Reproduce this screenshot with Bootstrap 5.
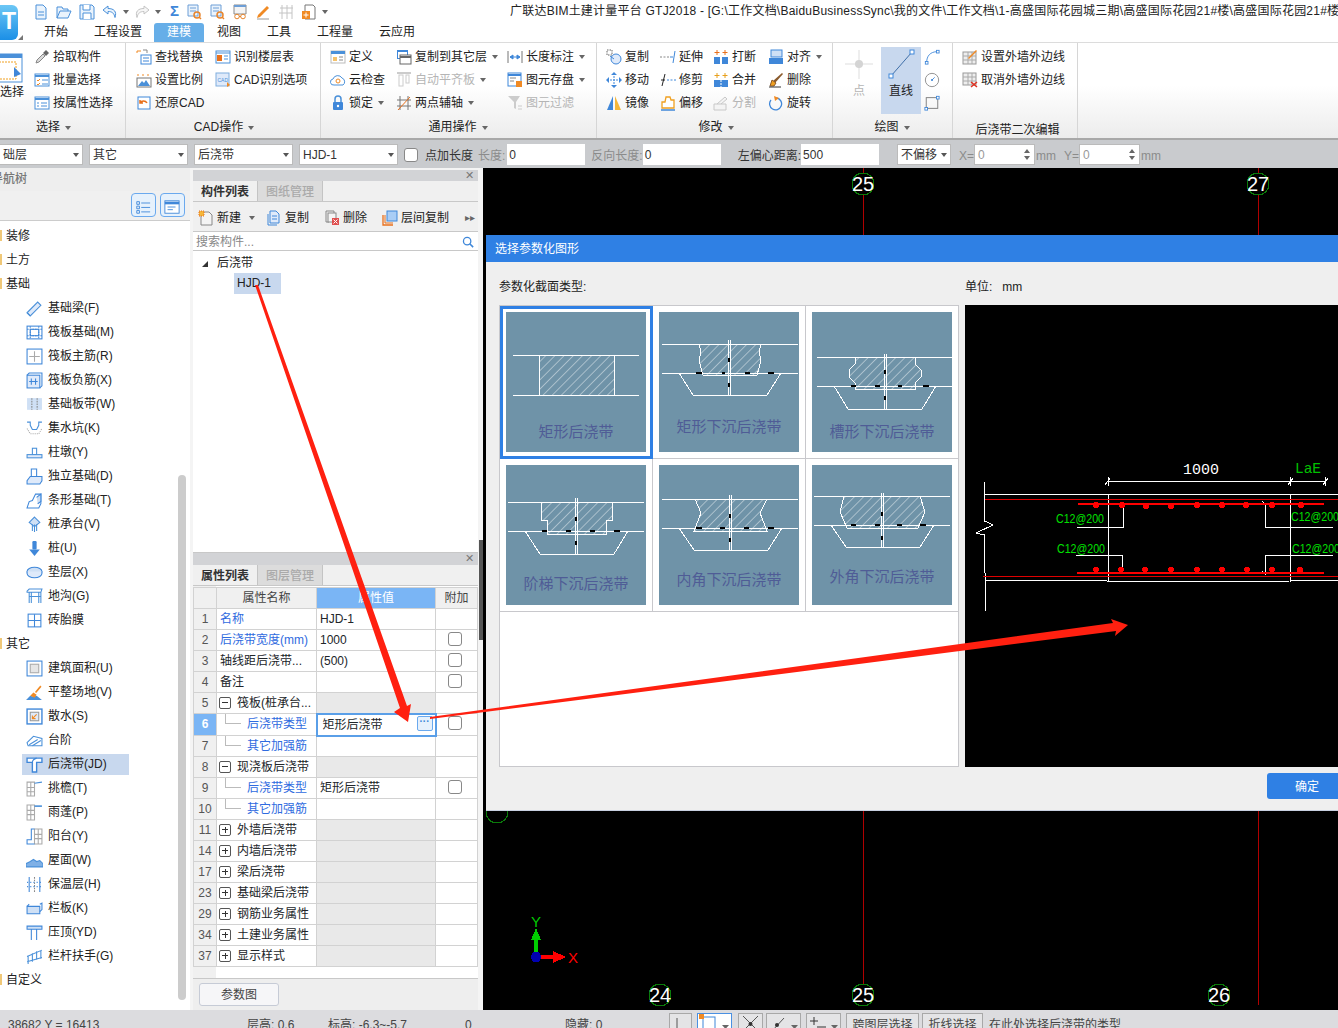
<!DOCTYPE html>
<html lang="zh-CN">
<head>
<meta charset="UTF-8">
<title>广联达BIM土建计量平台 GTJ2018</title>
<link href="https://cdn.jsdelivr.net/npm/bootstrap@5.3.0/dist/css/bootstrap.min.css" rel="stylesheet">
<style>
    html, body { margin: 0; background: #f4f4f4; }
    body { font-family: "Liberation Sans", "Noto Sans CJK SC", sans-serif; font-size: 12px; color: #222; }
    .app { width: 1338px; height: 1028px; overflow: hidden; position: relative; }
    .sprite { position: absolute; width: 0; height: 0; }
    .ic { width: 16px; height: 16px; flex: none; }
    .crt { display: inline-block; flex: none; width: 0; height: 0; border: 3.5px solid transparent; border-top: 4px solid #666; border-bottom: 0; margin-left: 5px; vertical-align: 1px; }

    /* title + tabs */
    .top-row { height: 23px; background: #fff; }
    .logo-box { width: 18px; height: 35px; margin-top: 5px; border-radius: 0 6px 6px 0; background: linear-gradient(#6cc7f5, #1b8fe6); color: #fff; font-weight: 700; font-size: 23px; line-height: 33px; text-align: right; padding-right: 2px; overflow: hidden; flex: none; }
    .logo-tri { position: absolute; left: 18px; top: 35px; width: 0; height: 0; border-left: 5px solid transparent; border-bottom: 5px solid #777; }
    .qa-bar { padding-left: 33px; gap: 7px; height: 23px; width: 510px; flex: none; }
    .qa-bar .crt { margin: 0 -2px; }
    .qa-sum { margin-left: 4px; font-size: 15px; color: #3f87d9; font-weight: 700; }
    .title-txt { white-space: nowrap; line-height: 22px; letter-spacing: .22px; }
    .tabs-row { height: 19px; background: #fff; padding-left: 44px; }
    .tabs-row span { line-height: 19px; white-space: nowrap; }
    .tab-on { background: #66aee8; color: #fff; width: 50px; text-align: center; border-radius: 3px 3px 0 0; }
    .t1 { margin-right: 26px; } .t2 { margin-right: 12px; } .t3 { margin-right: 13px; } .t4 { margin-right: 26px; } .t5 { margin-right: 26px; } .t6 { margin-right: 26px; }
    .logo-abs { position: absolute; left: 0; top: 0; }

    /* ribbon */
    .ribbon { height: 98px; border-top: 1px solid #dcdcdc; background: linear-gradient(#fff 45%, #ececec); border-bottom: 2px solid #a8a8a8; }
    .rb-group { border-right: 1px solid #d6d6d6; height: 95px; flex: none; position: relative; }
    .rb-body { height: 73px; padding-top: 2px; }
    .rb-label { text-align: center; line-height: 22px; white-space: nowrap; }
    .lb-g1 { padding-right: 18px; } .lb-g2 { padding-right: 8px; } .lb-g3 { padding-right: 10px; } .lb-g4 { padding-right: 6px; } .lb-g5 { padding-right: 12px; }
    .lb-g6 { padding-top: 3px; padding-right: 4px; }
    .rb-item { height: 23px; display: flex; align-items: center; gap: 3px; white-space: nowrap; }
    .rb-item .crt { margin-left: 2px; }
    .is-off { color: #b5b5b5; }
    .g1 { width: 126px; } .g2 { width: 195px; padding-left: 10px; } .g3 { width: 276px; padding-left: 9px; }
    .g4 { width: 236px; padding-left: 9px; } .g5 { width: 120px; padding-left: 11px; } .g6 { width: 125px; padding-left: 9px; }
    .big-cut { width: 34px; overflow: hidden; text-align: right; }
    .big-cut svg { display: block; width: 23px; height: 30px; margin-top: 8px; }
    .big-cut span { display: block; line-height: 18px; margin-right: 13px; white-space: nowrap; }
    .c79 { width: 79px; } .c66 { width: 66px; } .c111 { width: 111px; } .c54 { width: 54px; } .c53 { width: 53px; } .c55 { width: 55px; }
    .big-btn { display: flex; flex-direction: column; align-items: center; height: 67px; margin-top: 2px; line-height: 18px; }
    .big-pt { width: 30px; color: #b5b5b5; margin-right: 7px; }
    .big-ln { width: 40px; background: #c8d8ee; margin-right: 3px; }
    .big-btn svg { width: 30px; height: 30px; margin-top: 2px; margin-bottom: 3px; }
    .draw-col { width: 18px; }

    /* option bar */
    .optbar { height: 28px; background: #c9cbce; padding-top: 4px; white-space: nowrap; color: #333; }
    .o-sel { height: 21px; background: #fff; border: 1px solid #bbb; padding: 0 3px; margin-right: 6px; flex: none; }
    .o-sel .crt { border-top-color: #555; }
    .s83 { width: 83px; border-left: 0; } .s99 { width: 99px; }
    .s54 { width: 54px; margin: 0 8px 0 18px; }
    .o-chk { width: 14px; height: 14px; margin: 0 7px 0 0; border-radius: 3px; border-color: #888; }
    .o-in { background: #fff; height: 21px; line-height: 22px; padding-left: 2px; flex: none; width: 78px; }
    .o-gray { color: #8b8b8b; }
    .m1 { margin-left: 2px; margin-right: 1px; } .m2 { margin-left: 5px; } .m3 { margin-left: 17px; }
    .spin { width: 61px; background: #fff; height: 21px; border: 1px solid #bbb; padding-left: 3px; color: #999; flex: none; margin: 0 1px 0 0; }
    .spin-ar { gap: 3px; margin-right: 4px; }
    .spin-ar i { display: block; width: 0; height: 0; border: 3px solid transparent; }
    .spin-ar i:first-child { border-bottom: 4px solid #666; border-top: 0; }
    .spin-ar i:last-child { border-top: 4px solid #666; border-bottom: 0; }
    .gap-x { margin-left: 8px; }

    /* main */
    .main-area { height: 842px; }
    .nav-col { width: 190px; flex: none; background: #fff; position: relative; }
    .nav-head { height: 23px; background: #eee; color: #777; line-height: 22px; font-weight: 500; text-indent: -9px; overflow: hidden; }
    .nav-tools { height: 30px; background: #f0f0f0; border-bottom: 1px solid #ccc; padding: 2px 5px 0 0; gap: 4px; }
    .nav-btn { width: 25px; height: 24px; background: #e6f1fc; border: 1px solid #6aa9ee; border-radius: 4px; padding: 3px; }
    .nav-row { height: 24px; display: flex; align-items: center; white-space: nowrap; padding-left: 26px; gap: 5px; position: relative; }
    .nav-row .ic { width: 17px; height: 17px; }
    .nav-list { padding-top: 3px; }
    .nav-grp { padding-left: 6px; }
    .nav-grp::before { content: ""; position: absolute; left: 0; top: 6px; width: 2px; height: 11px; background: #f0c878; }
    .nav-sel::after { content: ""; position: absolute; left: 22px; top: 2px; width: 107px; height: 21px; background: #c8d8ee; z-index: 0; }
    .nav-row > * { position: relative; z-index: 1; }
    .nav-scroll { position: absolute; left: 178px; top: 307px; width: 8px; height: 525px; background: #ccc; border-radius: 4px; }
    .mid-col { width: 285px; flex: none; margin-left: 3px; padding-top: 2px; }
    .mid-gap { width: 5px; flex: none; }
    .mid-gap div { width: 4px; height: 100px; margin-top: 372px; margin-left: 1px; background: #555; }
    .panel-bar { height: 11px; background: #d2d3d6; text-align: right; line-height: 10px; color: #777; font-size: 11px; padding-right: 4px; }
    .panel-bar2 { height: 12px; }
    .tab-row { height: 21px; background: #f0f0f0; border-bottom: 1px solid #c8c8c8; }
    .tab-item { width: 65px; text-align: center; line-height: 22px; color: #aaa; font-weight: 500; background: #dcdcdc; border-right: 1px solid #c4c4c4; }
    .tab-cur { background: #f0f0f0; color: #333; font-weight: 700; }
    .list-tools { height: 30px; background: #f0f0f0; border-bottom: 1px solid #c8c8c8; padding: 2px 0 0 5px; white-space: nowrap; }
    .lt { gap: 3px; }
    .lt1 { margin-right: 11px; } .lt2 { margin-right: 15px; } .lt3 { margin-right: 15px; } .lt4 { margin-left: auto; margin-right: 3px; color: #666; font-size: 10px; }
    .search-row { height: 19px; background: #fff; border-bottom: 1px solid #c8c8c8; padding: 2px 4px 0 3px; color: #888; line-height: 18px; }
    .tree-box { height: 302px; background: #fff; border-bottom: 1px solid #c8c8c8; }
    .tree-line1 { padding: 2px 0 0 9px; line-height: 20px; }
    .tree-tri { display: inline-block; width: 0; height: 0; border-left: 6px solid transparent; border-bottom: 6px solid #333; margin-right: 9px; }
    .tree-cur { display: inline-block; margin-left: 41px; background: #c8d8ee; width: 47px; height: 21px; line-height: 21px; padding-left: 3px; }
    .prop-wrap { background: linear-gradient(90deg, #f0f0f0 23px, #fff 23px); height: 393px; padding-top: 1px; border-bottom: 1px solid #c8c8c8; }
    .prop-tbl { table-layout: fixed; width: 284px; margin: 0; border-color: #d2d2d2; }
    .prop-tbl td, .prop-tbl th { padding: 0 3px; height: 21px; line-height: 20px; font-weight: 400; white-space: nowrap; overflow: hidden; }
    .prop-tbl .n { background: #f0f0f0; color: #555; text-align: center; padding: 0; }
    .prop-tbl .hd { background: #f0f0f0; text-align: center; color: #444; }
    .prop-tbl .hd-on { background: #7ab5f5; color: #fff; text-align: center; }
    .prop-tbl .n-on { background: #7ab5f5; color: #fff; font-weight: 700; text-align: center; padding: 0; }
    .prop-tbl .gry { background: #e9e9e9; }
    .prop-tbl .blu { color: #2f6be0; }
    .prop-tbl .sub { padding-left: 30px; position: relative; }
    .prop-tbl .ctr { text-align: center; padding: 0 4px 0 0; }
    .prop-tbl .edit { border: 2px solid #5a9fe8; padding: 0 0 0 5px; position: relative; }
    .chk { width: 14px; height: 14px; margin: 2px 0 0; border-radius: 3px; border-color: #888; }
    .exp { display: inline-block; width: 12px; height: 12px; border: 1px solid #555; border-radius: 2px; margin: 0 6px 0 -1px; vertical-align: -2px; position: relative; }
    .exp::before { content: ""; position: absolute; left: 2px; top: 4px; width: 6px; height: 1px; background: #333; }
    .exp-p::after { content: ""; position: absolute; left: 4.5px; top: 2px; width: 1px; height: 6px; background: #333; }
    .tl::before { content: ""; position: absolute; left: 8px; top: -6px; width: 16px; height: 16px; border-left: 1px solid #bbb; border-bottom: 1px solid #bbb; }
    .dots-btn { position: absolute; right: 2px; top: 1px; width: 16px; height: 15px; background: #e6f1fc; border: 1px solid #6aa9ee; border-radius: 2px; color: #3f87d9; font-size: 10px; line-height: 10px; text-align: center; font-weight: 700; }
    .prop-foot { height: 31px; background: #eee; padding: 4px 0 0 6px; }
    .btn-param { width: 80px; height: 23px; font-size: 12px; padding: 0; background: #f6f6f8; border: 1px solid #c6cbd6; color: #444; border-radius: 3px; }

    /* canvas + dialog */
    .cad-view { width: 855px; flex: none; background: #000; position: relative; overflow: hidden; }
    .cad-svg { display: block; font-family: "Liberation Sans Narrow", "Liberation Sans", sans-serif; shape-rendering: crispEdges; }
    .dlg { position: absolute; left: 3px; top: 67px; width: 900px; height: 576px; background: #efefef; border-bottom: 1px solid #c8d0e0; }
    .dlg-head { height: 27px; background: #2f80e4; color: #fff; line-height: 28px; padding-left: 9px; }
    .dlg-labels { height: 43px; line-height: 50px; padding-left: 13px; }
    .lb1 { width: 466px; } .lb2 { white-space: pre; }
    .dlg-body { padding-left: 13px; gap: 6px; height: 462px; }
    .param-box { width: 460px; height: 462px; background: #fff; border: 1px solid #c8c8cc; }
    .param-grid { display: grid; grid-template-columns: repeat(3, 153px); grid-auto-rows: 153px; }
    .pcell { border-right: 1px solid #c8c8cc; border-bottom: 1px solid #c8c8cc; padding: 6px 0 0 6px; }
    .pcell svg { display: block; shape-rendering: crispEdges; }
    .pcell-on { outline: 3px solid #2f80e4; outline-offset: -3px; }
    .pv-box { width: 400px; background: #000; }
    .pv-box svg { display: block; shape-rendering: crispEdges; }
    .dlg-foot { padding: 6px 0 0 781px; }
    .btn-ok { width: 80px; height: 26px; background: #2f80e4; color: #fff; border: 0; font-size: 12px; padding: 2px 0 0; border-radius: 3px; text-align: center; }
    .arrows { position: absolute; left: 0; top: 0; pointer-events: none; }

    /* status */
    .statusbar { height: 18px; background: #dcdcdf; overflow: hidden; white-space: nowrap; color: #444; }
    .statusbar span { line-height: 18px; padding-top: 6px; flex: none; }
    .sb-1 { width: 247px; padding-left: 8px; } .sb-2 { width: 81px; } .sb-3 { width: 137px; } .sb-4 { width: 100px; } .sb-5 { width: 104px; }
    .sb-btn { height: 20px; margin-top: 3px; border: 1px solid #a8a8a8; background: #e4e4e6; margin-right: 3px; flex: none; text-align: center; line-height: 22px; }
    .sb-btn svg { display: block; }
    .b23 { width: 23px; margin-right: 5px; } .b35 { width: 35px; border-color: #4a90e2; background: #fff; margin-right: 6px; } .b25 { width: 25px; } .b35b { width: 35px; margin-right: 5px; } .b73 { width: 73px; } .b61 { width: 61px; margin-right: 6px; }
</style>
</head>
<body>
<div class="app">

<svg class="sprite" xmlns="http://www.w3.org/2000/svg">
  <defs>
    <pattern id="hatch" patternUnits="userSpaceOnUse" width="6.5" height="6.5" patternTransform="rotate(45)"><line x1="0" y1="0" x2="0" y2="6.5" stroke="#fff" stroke-width="0.8"/></pattern>
    <symbol id="q-new" viewBox="0 0 16 16"><path d="M3 1h7l3 3v11H3z" fill="#eaf3fc" stroke="#4a90d9"/><path d="M5 8h6M5 11h6" stroke="#4a90d9"/></symbol>
    <symbol id="q-open" viewBox="0 0 16 16"><path d="M1 14V3h5l1 2h5v2M1 14l3-7h11l-3 7z" fill="#eaf3fc" stroke="#4a90d9"/></symbol>
    <symbol id="q-save" viewBox="0 0 16 16"><path d="M1 1h12l2 2v12H1z" fill="#eaf3fc" stroke="#4a90d9"/><path d="M4 1v5h7V1M4 15V9h8v6" fill="#fff" stroke="#4a90d9"/></symbol>
    <symbol id="q-undo" viewBox="0 0 16 16"><path d="M6 2L1 6l5 4V7.500c4 0 6 1.500 7 6 2-6-1-9-7-9z" fill="#eaf3fc" stroke="#4a90d9"/></symbol>
    <symbol id="q-redo" viewBox="0 0 16 16"><path d="M10 2l5 4-5 4V7.500c-4 0-6 1.500-7 6-2-6 1-9 7-9z" fill="#f6f6f6" stroke="#c4c4c4"/></symbol>
    <symbol id="q-tbl" viewBox="0 0 16 16"><path d="M2 1h10v11H2z" fill="#eaf3fc" stroke="#6d9ed6"/><path d="M4 4h6M4 7h6" stroke="#6d9ed6"/><circle cx="11" cy="11" r="3" fill="none" stroke="#e8852c" stroke-width="1.500"/><path d="M13 13l2 2" stroke="#e8852c" stroke-width="1.500"/></symbol>
    <symbol id="q-cal" viewBox="0 0 16 16"><path d="M2 1h12v9H2z" fill="#f4f4f4" stroke="#8a8a8a"/><path d="M2 1h12v2H2z" fill="#6d9ed6"/><circle cx="5" cy="12.500" r="2.300" fill="none" stroke="#e8852c"/><circle cx="11" cy="12.500" r="2.300" fill="none" stroke="#e8852c"/><path d="M7 12.500h2" stroke="#e8852c"/></symbol>
    <symbol id="q-pen" viewBox="0 0 16 16"><path d="M3 11L12 2l2 2-9 9-3 1z" fill="#f08a24"/><path d="M2 15h12" stroke="#999"/></symbol>
    <symbol id="q-grid" viewBox="0 0 16 16"><path d="M2 4h13M1 9h13M4 1v14M9 1v14M14 1v14" stroke="#c4c4c4" fill="none"/></symbol>
    <symbol id="q-add" viewBox="0 0 16 16"><path d="M4 1h8l2 2v12H4z" fill="#fff" stroke="#777"/><rect x="1" y="7" width="8" height="8" fill="#f08a24"/><path d="M5 8.500v5M2.500 11h5" stroke="#fff"/></symbol>

    <symbol id="r-pick" viewBox="0 0 16 16"><path d="M2 14l1-3 6-6 2 2-6 6z" fill="#dadada" stroke="#888"/><path d="M9 4l3-3 3 3-3 3z" fill="#666"/></symbol>
    <symbol id="r-batch" viewBox="0 0 16 16"><rect x="1" y="2" width="14" height="12" fill="#fff" stroke="#4a90d9"/><path d="M1 4h14" stroke="#4a90d9" stroke-width="2"/><path d="M3 8l1 1 2-2M3 12l1 1 2-2" stroke="#f08a24" fill="none"/><path d="M8 8h6M8 12h6" stroke="#4a90d9"/></symbol>
    <symbol id="r-attr" viewBox="0 0 16 16"><rect x="1" y="2" width="14" height="12" fill="#fff" stroke="#4a90d9"/><path d="M1 4h14" stroke="#4a90d9" stroke-width="2"/><path d="M3 8h2M3 11h2M7 8h6M7 11h6" stroke="#4a90d9"/></symbol>
    <symbol id="r-find" viewBox="0 0 16 16"><path d="M1 2h4M1 2v2" stroke="#f08a24"/><path d="M7 1h4v3" stroke="#888" fill="none"/><rect x="5" y="6" width="10" height="9" fill="#fff" stroke="#3f87d9"/><path d="M7 9h6M7 12h6" stroke="#3f87d9"/></symbol>
    <symbol id="r-scale" viewBox="0 0 16 16"><path d="M1 3h14" stroke="#f08a24" stroke-dasharray="2 3"/><rect x="1" y="6" width="14" height="9" fill="#fff" stroke="#777"/><path d="M2 14l4-5 2 2 2-3 4 6z" fill="#4a90d9"/></symbol>
    <symbol id="r-undo" viewBox="0 0 16 16"><rect x="2" y="2" width="12" height="12" fill="#fff" stroke="#3f87d9"/><path d="M4 8a4 4 0 017 0M4 5v3h3" stroke="#e8701c" fill="none" stroke-width="1.500"/></symbol>
    <symbol id="r-floor" viewBox="0 0 16 16"><rect x="1" y="2" width="14" height="12" fill="#fff" stroke="#4a90d9"/><rect x="2" y="6" width="5" height="6" fill="#e8701c"/><path d="M9 7h4M9 10h4M1 4h14" stroke="#4a90d9"/></symbol>
    <symbol id="r-cad" viewBox="0 0 16 16"><rect x="1" y="1" width="13" height="13" fill="#dfeafa" stroke="#80aede"/><text x="2.500" y="10" font-size="5" fill="#4a90d9">CAD</text><path d="M12 10l3 3-3 2z" fill="#f08a24"/></symbol>
    <symbol id="r-def" viewBox="0 0 16 16"><rect x="1" y="2" width="14" height="12" fill="#fff" stroke="#bbb"/><rect x="1" y="2" width="14" height="3" fill="#4a90d9"/><rect x="3" y="8" width="4" height="4" fill="#f5c26b"/><path d="M9 8h4M9 11h4" stroke="#888"/></symbol>
    <symbol id="r-cloud" viewBox="0 0 16 16"><path d="M4 13a3 3 0 01-1-6 5 5 0 019-1 4 4 0 011 7z" fill="#fff" stroke="#4a90d9"/><circle cx="8" cy="9" r="2" fill="none" stroke="#f08a24"/></symbol>
    <symbol id="r-lock" viewBox="0 0 16 16"><path d="M5 7V4a3 3 0 016 0v3" fill="none" stroke="#4a90d9" stroke-width="1.500"/><rect x="3" y="7" width="10" height="8" rx="1" fill="#3f87d9"/><circle cx="8" cy="11" r="1.200" fill="#fff"/></symbol>
    <symbol id="r-copyf" viewBox="0 0 16 16"><rect x="1" y="1" width="11" height="9" fill="#3f87d9"/><rect x="2" y="3" width="9" height="6" fill="#fff"/><rect x="4" y="6" width="11" height="9" fill="#fff" stroke="#666"/><path d="M4 8h11" stroke="#666" stroke-width="2"/></symbol>
    <symbol id="r-align" viewBox="0 0 16 16"><path d="M1 1h14" stroke="#ccc" stroke-width="2"/><rect x="3" y="3" width="4" height="11" fill="#fff" stroke="#ccc"/><rect x="10" y="3" width="3" height="8" fill="#fff" stroke="#ccc"/></symbol>
    <symbol id="r-axis" viewBox="0 0 16 16"><path d="M4 1v14M12 1v14M1 5h14M1 11h14" stroke="#777"/><path d="M2 15L14 2" stroke="#e8701c"/></symbol>
    <symbol id="r-len" viewBox="0 0 16 16"><path d="M1 2v12M15 2v12" stroke="#777"/><path d="M3 8h10M3 8l3-2v4zM13 8l-3-2v4z" stroke="#3f87d9" fill="#3f87d9"/></symbol>
    <symbol id="r-save" viewBox="0 0 16 16"><rect x="1" y="1" width="13" height="13" fill="#fff" stroke="#3f87d9"/><path d="M1 3h13" stroke="#3f87d9" stroke-width="2"/><path d="M3 6h6M3 9h4" stroke="#888"/><rect x="9" y="9" width="6" height="6" fill="#f08a24"/></symbol>
    <symbol id="r-filt" viewBox="0 0 16 16"><path d="M1 1h12L9 7v7l-2-1V7z" fill="#ccc"/><path d="M11 11h4M11 14h4" stroke="#ccc"/></symbol>
    <symbol id="m-copy" viewBox="0 0 16 16"><rect x="1" y="1" width="5" height="5" fill="none" stroke="#666" stroke-dasharray="1.500 1"/><circle cx="10" cy="10" r="5" fill="#dfeafa" stroke="#3f87d9"/><path d="M4 7l4 3" stroke="#3f87d9"/></symbol>
    <symbol id="m-move" viewBox="0 0 16 16"><path d="M8 1v14M1 8h14" stroke="#3f87d9" stroke-dasharray="2 1"/><path d="M8 0l3 3H5zM8 16l3-3H5zM0 8l3-3v6zM16 8l-3-3v6z" fill="#3f87d9"/></symbol>
    <symbol id="m-mirror" viewBox="0 0 16 16"><path d="M7 1L1 15h6z" fill="#3f87d9"/><path d="M9 1l6 14H9z" fill="#f5b73a"/></symbol>
    <symbol id="m-ext" viewBox="0 0 16 16"><path d="M0 8h9" stroke="#888" stroke-dasharray="2 1.500"/><path d="M10 8h3" stroke="#3f87d9"/><path d="M15 2l-2 12" stroke="#3f87d9"/></symbol>
    <symbol id="m-trim" viewBox="0 0 16 16"><path d="M5 2L2 14" stroke="#222"/><path d="M1 8h4" stroke="#222"/><path d="M7 8h9" stroke="#3f87d9" stroke-dasharray="2 1.500"/></symbol>
    <symbol id="m-off" viewBox="0 0 16 16"><path d="M2 13V7h3l1-5h4l1 3h3v8z" fill="#fff" stroke="#f0a020" stroke-width="1.300"/><path d="M1 15h14" stroke="#3f87d9" stroke-width="1.500"/></symbol>
    <symbol id="m-brk" viewBox="0 0 16 16"><rect x="1" y="8" width="6" height="7" fill="#3f87d9"/><rect x="9" y="8" width="6" height="7" fill="#3f87d9"/><path d="M4 1v5M1.500 3.500h5M12 1v5M9.500 3.500h5" stroke="#e8701c"/></symbol>
    <symbol id="m-mrg" viewBox="0 0 16 16"><rect x="1" y="8" width="14" height="7" fill="#3f87d9"/><path d="M8 8v7" stroke="#fff" stroke-dasharray="2 1"/><path d="M4 1v5M1.500 3.500h5M12 1v5M9.500 3.500h5" stroke="#e8a01c"/></symbol>
    <symbol id="m-cut" viewBox="0 0 16 16"><path d="M1 9h12v6H1zM4 9l8-7 2 2-6 5" fill="#f4f4f4" stroke="#c8c8c8"/></symbol>
    <symbol id="m-al" viewBox="0 0 16 16"><rect x="3" y="1" width="11" height="7" fill="#cfe0f5" stroke="#3f87d9"/><rect x="1" y="9" width="14" height="6" fill="#3f87d9"/></symbol>
    <symbol id="m-del" viewBox="0 0 16 16"><path d="M5 9L14 1l1 1-8 9z" fill="#8a5a2c"/><path d="M2 14l2-6 4 3-2 3z" fill="#f0a020" stroke="#8a5a2c"/><path d="M1 15h12" stroke="#333"/></symbol>
    <symbol id="m-rot" viewBox="0 0 16 16"><path d="M9 3a6 6 0 11-6 2" fill="none" stroke="#3f87d9" stroke-width="1.300"/><path d="M6 1l5 2-4 3z" fill="#f08a24"/></symbol>
    <symbol id="d-arc" viewBox="0 0 18 18"><path d="M3 15C3 8 7 3 15 3" fill="none" stroke="#3f87d9"/><rect x="1.500" y="14" width="3" height="3" fill="#fff" stroke="#3f87d9"/><rect x="14" y="1.500" width="3" height="3" fill="#fff" stroke="#3f87d9"/></symbol>
    <symbol id="d-cir" viewBox="0 0 18 18"><circle cx="9" cy="9" r="7.500" fill="none" stroke="#888"/><path d="M9 9l3-3" stroke="#3f87d9"/><rect x="8" y="8" width="2" height="2" fill="#3f87d9"/></symbol>
    <symbol id="d-rec" viewBox="0 0 18 18"><rect x="2.500" y="3" width="13" height="12" fill="none" stroke="#777"/><rect x="1" y="14" width="3" height="3" fill="#fff" stroke="#3f87d9"/><rect x="14" y="1.500" width="3" height="3" fill="#fff" stroke="#3f87d9"/></symbol>
    <symbol id="e-set" viewBox="0 0 16 16"><rect x="1" y="3" width="13" height="12" fill="#eee" stroke="#999"/><path d="M1 7h13M1 11h13M6 3v12M10 3v12" stroke="#aaa"/><path d="M6 9L14 1l1 1-8 8z" fill="#f08a24"/></symbol>
    <symbol id="e-can" viewBox="0 0 16 16"><rect x="1" y="1" width="13" height="12" fill="#eee" stroke="#999"/><path d="M1 5h13M1 9h13M6 1v12M10 1v12" stroke="#aaa"/><path d="M9 10l6 5M15 10l-6 5" stroke="#e03020" stroke-width="1.500"/></symbol>
    <symbol id="t-list" viewBox="0 0 18 18"><path d="M2 3h3v3H2zM2 8h3v3H2zM2 13h3v3H2zM7 4.500h10M7 9.500h10M7 14.500h10" fill="none" stroke="#3f87d9"/></symbol>
    <symbol id="t-win" viewBox="0 0 18 18"><rect x="1" y="2" width="16" height="14" fill="#fff" stroke="#3f87d9"/><path d="M1 4.500h16" stroke="#3f87d9" stroke-width="3"/><path d="M4 9h9M4 12h6" stroke="#3f87d9"/></symbol>

    <symbol id="n-beam" viewBox="0 0 16 16"><path d="M1 12L11 2l3 3L4 15z" fill="#dfeafa" stroke="#4a90d9"/><path d="M1 12l3 3" stroke="#4a90d9"/></symbol>
    <symbol id="n-raft" viewBox="0 0 16 16"><rect x="1" y="2" width="14" height="12" fill="#fff" stroke="#3f87d9"/><rect x="4" y="5" width="8" height="6" fill="none" stroke="#3f87d9"/><path d="M1 5h14M1 11h14M4 2v12M12 2v12" stroke="#3f87d9" stroke-dasharray="1.500 1"/></symbol>
    <symbol id="n-main" viewBox="0 0 16 16"><rect x="1" y="1" width="14" height="14" fill="#fff" stroke="#3f87d9"/><path d="M8 3v10M3 8h10" stroke="#aaa"/></symbol>
    <symbol id="n-neg" viewBox="0 0 16 16"><rect x="1" y="3" width="12" height="12" fill="#dfeafa" stroke="#3f87d9"/><path d="M1 3l2-2h12v12l-2 2" fill="none" stroke="#3f87d9"/><path d="M5 6v6M9 6v6M3 9h8" stroke="#3f87d9"/></symbol>
    <symbol id="n-band" viewBox="0 0 16 16"><rect x="1" y="2" width="14" height="11" fill="#cfe0f5"/><path d="M5.500 2v11M10.500 2v11" stroke="#888" stroke-dasharray="1.500 1"/></symbol>
    <symbol id="n-pit" viewBox="0 0 16 16"><path d="M1 2h3v3l2 4h4l2-4V2h3" fill="none" stroke="#4a90d9"/><path d="M1 8l3 5h8l3-5" fill="none" stroke="#aaa" stroke-dasharray="1 1"/></symbol>
    <symbol id="n-ped" viewBox="0 0 16 16"><rect x="6" y="4" width="4" height="6" fill="#fff" stroke="#4a90d9"/><rect x="1" y="10" width="14" height="3" fill="#dfeafa" stroke="#4a90d9"/></symbol>
    <symbol id="n-ind" viewBox="0 0 16 16"><path d="M5 1h5v7H5z" fill="#fff" stroke="#3f87d9"/><path d="M1 15v-3l3-4h11v4l-2 3z" fill="#dfeafa" stroke="#3f87d9"/></symbol>
    <symbol id="n-str" viewBox="0 0 16 16"><path d="M1 15l2-6 3-1 3-6h5v9l-2 4z" fill="#fff" stroke="#3f87d9"/><path d="M10 5l4-3v7l-3 2" fill="#cfe0f5" stroke="#3f87d9"/></symbol>
    <symbol id="n-cap" viewBox="0 0 16 16"><path d="M8 1l5 5-5 4-5-4z" fill="#cfe0f5" stroke="#4a90d9"/><path d="M6 8v6M8 8v7M10 8v6" stroke="#4a90d9"/></symbol>
    <symbol id="n-pile" viewBox="0 0 16 16"><rect x="6" y="1" width="4" height="8" rx="1" fill="#3f87d9"/><path d="M3 9h10L8 15z" fill="#3f87d9"/></symbol>
    <symbol id="n-pad" viewBox="0 0 16 16"><ellipse cx="8" cy="7" rx="7" ry="4" fill="#cfe0f5" stroke="#3f87d9"/><path d="M1 7v2c0 2 3 4 7 4s7-2 7-4V7" fill="#dfeafa" stroke="#3f87d9"/></symbol>
    <symbol id="n-ditch" viewBox="0 0 16 16"><path d="M1 3l2-2h12l-1 3H1zM3 4v10M5 4v10M12 4v10M14 4v10M3 8h11" fill="none" stroke="#4a90d9"/></symbol>
    <symbol id="n-brick" viewBox="0 0 16 16"><rect x="2" y="2" width="12" height="12" fill="#fff" stroke="#3f87d9"/><path d="M2 8h12M8 2v12" stroke="#3f87d9"/></symbol>
    <symbol id="n-area" viewBox="0 0 16 16"><rect x="1" y="1" width="14" height="14" fill="#fff" stroke="#3f87d9"/><rect x="4" y="4" width="8" height="8" fill="#e6e6e6" stroke="#aaa"/></symbol>
    <symbol id="n-site" viewBox="0 0 16 16"><path d="M0 15l4-4 3 1 3-1 5 4z" fill="#4a90d9"/><path d="M4 11l3-3 3 2-2 3z" fill="#f08a24"/><path d="M9 8l5-6" stroke="#f08a24" stroke-width="1.500"/></symbol>
    <symbol id="n-apron" viewBox="0 0 16 16"><rect x="1" y="1" width="14" height="14" fill="#fff" stroke="#3f87d9" stroke-width="1.300"/><rect x="4" y="4" width="8" height="8" fill="#dfeafa" stroke="#999"/><path d="M10 6L6 10M6 7v3h3" stroke="#f08a24" fill="none"/></symbol>
    <symbol id="n-step" viewBox="0 0 16 16"><path d="M1 10l6-6 8 2v7H2z" fill="#fff" stroke="#4a90d9"/><path d="M3 12l8-5M6 13l8-5" stroke="#4a90d9"/></symbol>
    <symbol id="n-post" viewBox="0 0 16 16"><path d="M1 2h14v4H10v9H6V6H1z" fill="#fff" stroke="#3f87d9" stroke-width="1.300"/><path d="M6 6c0-1 1-3 4-4" stroke="#3f87d9" fill="none"/></symbol>
    <symbol id="n-eave" viewBox="0 0 16 16"><path d="M1 2h7v13H1zM1 7h7M1 11h7M4.500 2v13" fill="#fff" stroke="#aaa"/><path d="M8 3l7-1" stroke="#4a90d9"/></symbol>
    <symbol id="n-rain" viewBox="0 0 16 16"><path d="M1 1h7v14H1zM1 6h7M1 10h7M4.500 1v14" fill="#fff" stroke="#aaa"/><path d="M8 2h7" stroke="#4a90d9" stroke-width="1.500"/></symbol>
    <symbol id="n-balc" viewBox="0 0 16 16"><path d="M8 1h7v14H8zM8 6h7M8 10h7M11.500 1v14" fill="#fff" stroke="#aaa"/><path d="M8 1H5v10H1v4h7" fill="none" stroke="#3f87d9"/></symbol>
    <symbol id="n-roof" viewBox="0 0 16 16"><path d="M0 11l4-2 3-2 3 2 3-1 3 3v3H0z" fill="#7fb0e6" stroke="#4a90d9"/></symbol>
    <symbol id="n-ins" viewBox="0 0 16 16"><path d="M3 1v14M13 1v14" stroke="#3f87d9"/><path d="M8 1v14" stroke="#888" stroke-dasharray="1.500 1"/><path d="M1 6h14M1 10h14" stroke="#3f87d9" stroke-dasharray="1 2"/></symbol>
    <symbol id="n-panel" viewBox="0 0 16 16"><path d="M1 6h12v7H1z" fill="#cfe0f5" stroke="#3f87d9"/><path d="M13 4l2-1v6l-2 2M1 6l2-2" fill="none" stroke="#3f87d9"/></symbol>
    <symbol id="n-coping" viewBox="0 0 16 16"><path d="M1 2h14v3H1zM5 5v10M10 5v10" fill="#cfe0f5" stroke="#3f87d9"/></symbol>
    <symbol id="n-rail" viewBox="0 0 16 16"><path d="M1 8l14-6M2 7v8M6 5v8M10 3v8M14 2v8M1 13l14-4" fill="none" stroke="#4a90d9"/></symbol>
    <symbol id="p-new" viewBox="0 0 16 16"><path d="M3 2h8l3 3v10H3z" fill="#f4f4f4" stroke="#888"/><rect x="1" y="1" width="5" height="5" fill="#f5b73a" stroke-dasharray="1 1" stroke="#e8701c"/></symbol>
    <symbol id="p-copy" viewBox="0 0 16 16"><path d="M4 1h6l3 3v9H4z" fill="#dfeafa" stroke="#3f87d9"/><path d="M2 4v11h9M6 6h5M6 9h5" stroke="#3f87d9" fill="none"/></symbol>
    <symbol id="p-del" viewBox="0 0 16 16"><path d="M2 1h8v2M2 1v11h3" fill="none" stroke="#888"/><rect x="4" y="3" width="8" height="9" fill="#f4f4f4" stroke="#888"/><rect x="8" y="8" width="7" height="7" fill="#e05050"/><path d="M9.500 9.500l4 4M13.500 9.500l-4 4" stroke="#fff"/></symbol>
    <symbol id="p-floor" viewBox="0 0 16 16"><path d="M1 5v10h10" fill="none" stroke="#e8701c" stroke-width="1.300"/><path d="M3 5v8h8" fill="none" stroke="#e8701c"/><rect x="5" y="1" width="10" height="10" fill="#a9cdf5" stroke="#3f87d9"/></symbol>
    <symbol id="p-srch" viewBox="0 0 14 14"><circle cx="6" cy="6" r="4.300" fill="none" stroke="#3f87d9" stroke-width="1.500"/><path d="M9 9l4 4" stroke="#3f87d9" stroke-width="1.800"/></symbol>
  </defs>
</svg>

<div class="logo-abs logo-box">T</div>
<i class="logo-tri"></i>

<!-- quick access + window title -->
<div class="top-row d-flex">
  <div class="qa-bar d-flex align-items-center">
    <svg class="ic"><use href="#q-new"/></svg><svg class="ic"><use href="#q-open"/></svg><svg class="ic"><use href="#q-save"/></svg><svg class="ic"><use href="#q-undo"/></svg><i class="crt"></i>
    <svg class="ic"><use href="#q-redo"/></svg><i class="crt"></i>
    <span class="qa-sum">Σ</span><svg class="ic"><use href="#q-tbl"/></svg><svg class="ic"><use href="#q-tbl"/></svg><svg class="ic"><use href="#q-cal"/></svg><svg class="ic"><use href="#q-pen"/></svg><svg class="ic"><use href="#q-grid"/></svg><svg class="ic"><use href="#q-add"/></svg><i class="crt"></i>
  </div>
  <div class="title-txt">广联达BIM土建计量平台 GTJ2018 - [G:\工作文档\BaiduBusinessSync\我的文件\工作文档\1-高盛国际花园城三期\高盛国际花园21#楼\高盛国际花园21#楼</div>
</div>
<div class="tabs-row d-flex">
  <span class="t1">开始</span><span class="t2">工程设置</span><span class="tab-on t3">建模</span><span class="t4">视图</span><span class="t5">工具</span><span class="t6">工程量</span><span>云应用</span>
</div>

<!-- ribbon -->
<div class="ribbon d-flex">
  <div class="rb-group g1">
    <div class="rb-body d-flex">
      <div class="big-cut">
        <svg viewBox="0 0 23 30"><rect x="-6" y="1" width="28" height="28" fill="#fff" stroke="#4a90d9"/><rect x="-6" y="1" width="28" height="4" fill="#4a90d9"/><rect x="-4" y="9" width="20" height="17" fill="none" stroke="#f0a020" stroke-dasharray="2 1"/><path d="M14 14l7 7-7 3z" fill="#3f87d9"/></svg>
        <span>选择</span>
      </div>
      <div>
        <div class="rb-item"><svg class="ic"><use href="#r-pick"/></svg><span>拾取构件</span></div>
        <div class="rb-item"><svg class="ic"><use href="#r-batch"/></svg><span>批量选择</span></div>
        <div class="rb-item"><svg class="ic"><use href="#r-attr"/></svg><span>按属性选择</span></div>
      </div>
    </div>
    <div class="rb-label lb-g1">选择<i class="crt"></i></div>
  </div>
  <div class="rb-group g2">
    <div class="rb-body d-flex">
      <div class="c79">
        <div class="rb-item"><svg class="ic"><use href="#r-find"/></svg><span>查找替换</span></div>
        <div class="rb-item"><svg class="ic"><use href="#r-scale"/></svg><span>设置比例</span></div>
        <div class="rb-item"><svg class="ic"><use href="#r-undo"/></svg><span>还原CAD</span></div>
      </div>
      <div>
        <div class="rb-item"><svg class="ic"><use href="#r-floor"/></svg><span>识别楼层表</span></div>
        <div class="rb-item"><svg class="ic"><use href="#r-cad"/></svg><span>CAD识别选项</span></div>
      </div>
    </div>
    <div class="rb-label lb-g2">CAD操作<i class="crt"></i></div>
  </div>
  <div class="rb-group g3">
    <div class="rb-body d-flex">
      <div class="c66">
        <div class="rb-item"><svg class="ic"><use href="#r-def"/></svg><span>定义</span></div>
        <div class="rb-item"><svg class="ic"><use href="#r-cloud"/></svg><span>云检查</span></div>
        <div class="rb-item"><svg class="ic"><use href="#r-lock"/></svg><span>锁定</span><i class="crt"></i></div>
      </div>
      <div class="c111">
        <div class="rb-item"><svg class="ic"><use href="#r-copyf"/></svg><span>复制到其它层</span><i class="crt"></i></div>
        <div class="rb-item is-off"><svg class="ic"><use href="#r-align"/></svg><span>自动平齐板</span><i class="crt"></i></div>
        <div class="rb-item"><svg class="ic"><use href="#r-axis"/></svg><span>两点辅轴</span><i class="crt"></i></div>
      </div>
      <div>
        <div class="rb-item"><svg class="ic"><use href="#r-len"/></svg><span>长度标注</span><i class="crt"></i></div>
        <div class="rb-item"><svg class="ic"><use href="#r-save"/></svg><span>图元存盘</span><i class="crt"></i></div>
        <div class="rb-item is-off"><svg class="ic"><use href="#r-filt"/></svg><span>图元过滤</span></div>
      </div>
    </div>
    <div class="rb-label lb-g3">通用操作<i class="crt"></i></div>
  </div>
  <div class="rb-group g4">
    <div class="rb-body d-flex">
      <div class="c54">
        <div class="rb-item"><svg class="ic"><use href="#m-copy"/></svg><span>复制</span></div>
        <div class="rb-item"><svg class="ic"><use href="#m-move"/></svg><span>移动</span></div>
        <div class="rb-item"><svg class="ic"><use href="#m-mirror"/></svg><span>镜像</span></div>
      </div>
      <div class="c53">
        <div class="rb-item"><svg class="ic"><use href="#m-ext"/></svg><span>延伸</span></div>
        <div class="rb-item"><svg class="ic"><use href="#m-trim"/></svg><span>修剪</span></div>
        <div class="rb-item"><svg class="ic"><use href="#m-off"/></svg><span>偏移</span></div>
      </div>
      <div class="c55">
        <div class="rb-item"><svg class="ic"><use href="#m-brk"/></svg><span>打断</span></div>
        <div class="rb-item"><svg class="ic"><use href="#m-mrg"/></svg><span>合并</span></div>
        <div class="rb-item is-off"><svg class="ic"><use href="#m-cut"/></svg><span>分割</span></div>
      </div>
      <div>
        <div class="rb-item"><svg class="ic"><use href="#m-al"/></svg><span>对齐</span><i class="crt"></i></div>
        <div class="rb-item"><svg class="ic"><use href="#m-del"/></svg><span>删除</span></div>
        <div class="rb-item"><svg class="ic"><use href="#m-rot"/></svg><span>旋转</span></div>
      </div>
    </div>
    <div class="rb-label lb-g4">修改<i class="crt"></i></div>
  </div>
  <div class="rb-group g5">
    <div class="rb-body d-flex">
      <div class="big-btn big-pt">
        <svg viewBox="0 0 30 30"><path d="M15 1v29M1 15h28" stroke="#ddd"/><circle cx="15" cy="15" r="4" fill="#d4d4d4"/></svg>
        <span>点</span>
      </div>
      <div class="big-btn big-ln">
        <svg viewBox="0 0 30 30"><path d="M5 27L26 3" stroke="#3f6fa8"/><rect x="3" y="25" width="4" height="4" fill="#fff" stroke="#3f87d9"/><rect x="24" y="1" width="4" height="4" fill="#fff" stroke="#3f87d9"/></svg>
        <span>直线</span>
      </div>
      <div class="draw-col">
        <div class="rb-item"><svg class="ic"><use href="#d-arc"/></svg></div>
        <div class="rb-item"><svg class="ic"><use href="#d-cir"/></svg></div>
        <div class="rb-item"><svg class="ic"><use href="#d-rec"/></svg></div>
      </div>
    </div>
    <div class="rb-label lb-g5">绘图<i class="crt"></i></div>
  </div>
  <div class="rb-group g6">
    <div class="rb-body">
      <div class="rb-item"><svg class="ic"><use href="#e-set"/></svg><span>设置外墙外边线</span></div>
      <div class="rb-item"><svg class="ic"><use href="#e-can"/></svg><span>取消外墙外边线</span></div>
    </div>
    <div class="rb-label lb-g6">后浇带二次编辑</div>
  </div>
</div>

<!-- option bar -->
<div class="optbar d-flex">
  <div class="o-sel s83 d-flex justify-content-between align-items-center"><span>础层</span><i class="crt"></i></div>
  <div class="o-sel s99 d-flex justify-content-between align-items-center"><span>其它</span><i class="crt"></i></div>
  <div class="o-sel s99 d-flex justify-content-between align-items-center"><span>后浇带</span><i class="crt"></i></div>
  <div class="o-sel s99 d-flex justify-content-between align-items-center"><span>HJD-1</span><i class="crt"></i></div>
  <input type="checkbox" class="form-check-input o-chk mt-1">
  <span class="lh-lg">点加长度</span>
  <span class="o-gray m2 lh-lg">长度:</span><div class="o-in m1">0</div>
  <span class="o-gray m2 lh-lg">反向长度:</span><div class="o-in">0</div>
  <span class="m3 lh-lg">左偏心距离:</span><div class="o-in">500</div>
  <div class="o-sel s54 d-flex justify-content-between align-items-center"><span>不偏移</span><i class="crt m-0"></i></div>
  <span class="o-gray lh-lg">X=</span>
  <div class="spin d-flex justify-content-between align-items-center"><span>0</span><div class="spin-ar d-flex flex-column"><i></i><i></i></div></div>
  <span class="o-gray lh-lg">mm</span><span class="o-gray lh-lg gap-x">Y=</span>
  <div class="spin d-flex justify-content-between align-items-center"><span>0</span><div class="spin-ar d-flex flex-column"><i></i><i></i></div></div>
  <span class="o-gray lh-lg">mm</span>
</div>

<div class="main-area d-flex">
  <!-- navigation tree -->
  <div class="nav-col">
    <div class="nav-head">导航树</div>
    <div class="nav-tools d-flex justify-content-end">
      <div class="nav-btn"><svg class="ic"><use href="#t-list"/></svg></div>
      <div class="nav-btn"><svg class="ic"><use href="#t-win"/></svg></div>
    </div>
    <div class="nav-list">
      <div class="nav-row nav-grp"><span>装修</span></div>
      <div class="nav-row nav-grp"><span>土方</span></div>
      <div class="nav-row nav-grp"><span>基础</span></div>
      <div class="nav-row"><svg class="ic"><use href="#n-beam"/></svg><span>基础梁(F)</span></div>
      <div class="nav-row"><svg class="ic"><use href="#n-raft"/></svg><span>筏板基础(M)</span></div>
      <div class="nav-row"><svg class="ic"><use href="#n-main"/></svg><span>筏板主筋(R)</span></div>
      <div class="nav-row"><svg class="ic"><use href="#n-neg"/></svg><span>筏板负筋(X)</span></div>
      <div class="nav-row"><svg class="ic"><use href="#n-band"/></svg><span>基础板带(W)</span></div>
      <div class="nav-row"><svg class="ic"><use href="#n-pit"/></svg><span>集水坑(K)</span></div>
      <div class="nav-row"><svg class="ic"><use href="#n-ped"/></svg><span>柱墩(Y)</span></div>
      <div class="nav-row"><svg class="ic"><use href="#n-ind"/></svg><span>独立基础(D)</span></div>
      <div class="nav-row"><svg class="ic"><use href="#n-str"/></svg><span>条形基础(T)</span></div>
      <div class="nav-row"><svg class="ic"><use href="#n-cap"/></svg><span>桩承台(V)</span></div>
      <div class="nav-row"><svg class="ic"><use href="#n-pile"/></svg><span>桩(U)</span></div>
      <div class="nav-row"><svg class="ic"><use href="#n-pad"/></svg><span>垫层(X)</span></div>
      <div class="nav-row"><svg class="ic"><use href="#n-ditch"/></svg><span>地沟(G)</span></div>
      <div class="nav-row"><svg class="ic"><use href="#n-brick"/></svg><span>砖胎膜</span></div>
      <div class="nav-row nav-grp"><span>其它</span></div>
      <div class="nav-row"><svg class="ic"><use href="#n-area"/></svg><span>建筑面积(U)</span></div>
      <div class="nav-row"><svg class="ic"><use href="#n-site"/></svg><span>平整场地(V)</span></div>
      <div class="nav-row"><svg class="ic"><use href="#n-apron"/></svg><span>散水(S)</span></div>
      <div class="nav-row"><svg class="ic"><use href="#n-step"/></svg><span>台阶</span></div>
      <div class="nav-row nav-sel"><svg class="ic"><use href="#n-post"/></svg><span>后浇带(JD)</span></div>
      <div class="nav-row"><svg class="ic"><use href="#n-eave"/></svg><span>挑檐(T)</span></div>
      <div class="nav-row"><svg class="ic"><use href="#n-rain"/></svg><span>雨蓬(P)</span></div>
      <div class="nav-row"><svg class="ic"><use href="#n-balc"/></svg><span>阳台(Y)</span></div>
      <div class="nav-row"><svg class="ic"><use href="#n-roof"/></svg><span>屋面(W)</span></div>
      <div class="nav-row"><svg class="ic"><use href="#n-ins"/></svg><span>保温层(H)</span></div>
      <div class="nav-row"><svg class="ic"><use href="#n-panel"/></svg><span>栏板(K)</span></div>
      <div class="nav-row"><svg class="ic"><use href="#n-coping"/></svg><span>压顶(YD)</span></div>
      <div class="nav-row"><svg class="ic"><use href="#n-rail"/></svg><span>栏杆扶手(G)</span></div>
      <div class="nav-row nav-grp"><span>自定义</span></div>
    </div>
    <div class="nav-scroll"></div>
  </div>

  <!-- component + property lists -->
  <div class="mid-col">
    <div class="panel-bar">✕</div>
    <div class="tab-row d-flex">
      <div class="tab-item tab-cur">构件列表</div>
      <div class="tab-item">图纸管理</div>
    </div>
    <div class="list-tools d-flex align-items-center">
      <div class="d-flex align-items-center lt lt1"><svg class="ic"><use href="#p-new"/></svg><span>新建</span><i class="crt"></i></div>
      <div class="d-flex align-items-center lt lt2"><svg class="ic"><use href="#p-copy"/></svg><span>复制</span></div>
      <div class="d-flex align-items-center lt lt3"><svg class="ic"><use href="#p-del"/></svg><span>删除</span></div>
      <div class="d-flex align-items-center lt"><svg class="ic"><use href="#p-floor"/></svg><span>层间复制</span></div>
      <span class="lt4">▸▸</span>
    </div>
    <div class="search-row d-flex justify-content-between align-items-center"><span>搜索构件...</span><svg width="12" height="12"><use href="#p-srch"/></svg></div>
    <div class="tree-box">
      <div class="tree-line1"><i class="tree-tri"></i>后浇带</div>
      <div class="tree-cur">HJD-1</div>
    </div>
    <div class="panel-bar panel-bar2">✕</div>
    <div class="tab-row d-flex">
      <div class="tab-item tab-cur">属性列表</div>
      <div class="tab-item">图层管理</div>
    </div>
    <div class="prop-wrap">
      <table class="table table-bordered prop-tbl">
        <colgroup><col width="23"><col width="100"><col width="119"><col width="42"></colgroup>
        <tr><th class="n"></th><th class="hd">属性名称</th><th class="hd-on">属性值</th><th class="hd">附加</th></tr>
        <tr><td class="n">1</td><td class="blu">名称</td><td>HJD-1</td><td></td></tr>
        <tr><td class="n">2</td><td class="blu">后浇带宽度(mm)</td><td>1000</td><td class="ctr"><input type="checkbox" class="form-check-input chk"></td></tr>
        <tr><td class="n">3</td><td>轴线距后浇带...</td><td>(500)</td><td class="ctr"><input type="checkbox" class="form-check-input chk"></td></tr>
        <tr><td class="n">4</td><td>备注</td><td></td><td class="ctr"><input type="checkbox" class="form-check-input chk"></td></tr>
        <tr><td class="n">5</td><td><i class="exp"></i>筏板(桩承台...</td><td class="gry"></td><td></td></tr>
        <tr><td class="n-on">6</td><td class="sub tl blu">后浇带类型</td><td class="edit">矩形后浇带<div class="dots-btn">···</div></td><td class="ctr"><input type="checkbox" class="form-check-input chk"></td></tr>
        <tr><td class="n">7</td><td class="sub tl blu">其它加强筋</td><td></td><td></td></tr>
        <tr><td class="n">8</td><td><i class="exp"></i>现浇板后浇带</td><td class="gry"></td><td></td></tr>
        <tr><td class="n">9</td><td class="sub tl blu">后浇带类型</td><td>矩形后浇带</td><td class="ctr"><input type="checkbox" class="form-check-input chk"></td></tr>
        <tr><td class="n">10</td><td class="sub tl blu">其它加强筋</td><td></td><td></td></tr>
        <tr><td class="n">11</td><td><i class="exp exp-p"></i>外墙后浇带</td><td class="gry"></td><td></td></tr>
        <tr><td class="n">14</td><td><i class="exp exp-p"></i>内墙后浇带</td><td class="gry"></td><td></td></tr>
        <tr><td class="n">17</td><td><i class="exp exp-p"></i>梁后浇带</td><td class="gry"></td><td></td></tr>
        <tr><td class="n">23</td><td><i class="exp exp-p"></i>基础梁后浇带</td><td class="gry"></td><td></td></tr>
        <tr><td class="n">29</td><td><i class="exp exp-p"></i>钢筋业务属性</td><td class="gry"></td><td></td></tr>
        <tr><td class="n">34</td><td><i class="exp exp-p"></i>土建业务属性</td><td class="gry"></td><td></td></tr>
        <tr><td class="n">37</td><td><i class="exp exp-p"></i>显示样式</td><td class="gry"></td><td></td></tr>
      </table>
    </div>
    <div class="prop-foot"><button type="button" class="btn btn-param">参数图</button></div>
  </div>
  <div class="mid-gap"><div></div></div>

  <!-- drawing canvas -->
  <div class="cad-view">
    <svg class="cad-svg" width="855" height="842" viewBox="483 168 855 842">
      <g stroke="#b00000"><line x1="863" y1="168" x2="863" y2="1005"/><line x1="1258" y1="168" x2="1258" y2="1005"/></g>
      <g fill="#000" stroke="#0a7a0a">
        <circle cx="863" cy="184" r="11"/><circle cx="1258" cy="184" r="11"/>
        <circle cx="660" cy="995" r="11"/><circle cx="863" cy="995" r="11"/><circle cx="1219" cy="995" r="11"/><circle cx="497" cy="812" r="11"/>
      </g>
      <g fill="#fff" font-size="20" text-anchor="middle">
        <text x="863" y="191">25</text><text x="1258" y="191">27</text>
        <text x="660" y="1002">24</text><text x="863" y="1002">25</text><text x="1219" y="1002">26</text>
      </g>
      <path d="M536 955V936" stroke="#0c0" stroke-width="4"/><path d="M536 928l-5 12h10z" fill="#0c0"/>
      <text x="536" y="927" font-size="15" fill="#0c0" text-anchor="middle">Y</text>
      <path d="M538 957h17" stroke="#f00" stroke-width="4"/><path d="M566 957l-13-6v12z" fill="#f00"/>
      <text x="573" y="963" font-size="15" fill="#f00" text-anchor="middle">X</text>
      <ellipse cx="536" cy="957" rx="5" ry="5.500" fill="#0000b0"/>
    </svg>

    <div class="dlg">
      <div class="dlg-head">选择参数化图形</div>
      <div class="dlg-labels d-flex"><div class="lb1">参数化截面类型:</div><div class="lb2">单位:   mm</div></div>
      <div class="dlg-body d-flex">
        <div class="param-box">
          <div class="param-grid">
            <div class="pcell pcell-on"><svg width="140" height="140"><rect width="140" height="140" fill="#6f93a8"/><g stroke="#fff" fill="none"><path d="M7 43H133M7 83H133"/><rect x="33" y="43" width="75" height="40" fill="url(#hatch)"/></g><text x="70" y="125" text-anchor="middle" font-size="15" fill="#4f5c96">矩形后浇带</text></svg></div>
            <div class="pcell"><svg width="140" height="140"><rect width="140" height="140" fill="#6f93a8"/><g stroke="#fff" fill="none"><path d="M3 32H139M3 61H139"/><path d="M40 32H102L100 40 102 48 100 56 98 63H44L42 56 40 48 42 40Z" fill="url(#hatch)"/><path d="M20 61L34 83H108L122 61"/><path d="M69 28V84M71.500 28V84"/></g><path d="M37 61h6M63 61h3M86 61h5M109 61h6M70 46v4M70 71v4" stroke="#000" stroke-width="1.200"/><text x="70" y="120" text-anchor="middle" font-size="15" fill="#4f5c96">矩形下沉后浇带</text></svg></div>
            <div class="pcell"><svg width="140" height="140"><rect width="140" height="140" fill="#6f93a8"/><g stroke="#fff" fill="none"><path d="M5 45H140M5 74H140"/><path d="M43 45H103V52L109 58V65L103 71V77H43V71L37 65V58L43 52Z" fill="url(#hatch)"/><path d="M22 74L36 97H110L124 74"/><path d="M72 42V97M74.500 42V97"/></g><path d="M39 74h5M63 74h5M86 74h4M111 74h6M73 58v4M73 84v4" stroke="#000" stroke-width="1.200"/><text x="70" y="125" text-anchor="middle" font-size="15" fill="#4f5c96">槽形下沉后浇带</text></svg></div>
            <div class="pcell"><svg width="140" height="140"><rect width="140" height="140" fill="#6f93a8"/><g stroke="#fff" fill="none"><path d="M2 37H138M2 66H138"/><path d="M35 37H106V55H100V69H41V55H35Z" fill="url(#hatch)"/><path d="M19 66L34 89H108L122 66"/><path d="M69 33V89M71.500 33V89"/></g><path d="M36 66h5M60 66h5M84 66h5M108 66h6M70 52v4M70 76v4" stroke="#000" stroke-width="1.200"/><text x="70" y="124" text-anchor="middle" font-size="15" fill="#4f5c96">阶梯下沉后浇带</text></svg></div>
            <div class="pcell"><svg width="140" height="140"><rect width="140" height="140" fill="#6f93a8"/><g stroke="#fff" fill="none"><path d="M3 34H139M3 63H139"/><path d="M36 34H108L101 48 108 66H35L42 48Z" fill="url(#hatch)"/><path d="M20 63L35 85H109L123 63"/><path d="M70 30V86M72.500 30V86"/></g><path d="M37 63h6M61 63h5M85 63h5M109 63h6M71 49v4M71 73v4" stroke="#000" stroke-width="1.200"/><text x="70" y="120" text-anchor="middle" font-size="15" fill="#4f5c96">内角下沉后浇带</text></svg></div>
            <div class="pcell"><svg width="140" height="140"><rect width="140" height="140" fill="#6f93a8"/><g stroke="#fff" fill="none"><path d="M2 31H138M2 60H138"/><path d="M32 31H108L113 47 106 63H35L28 47Z" fill="url(#hatch)"/><path d="M19 60L34 82H108L122 60"/><path d="M69 28V83M71.500 28V83"/></g><path d="M39 60h5M63 60h5M85 60h5M108 60h6M70 47v4M70 71v4" stroke="#000" stroke-width="1.200"/><text x="70" y="117" text-anchor="middle" font-size="15" fill="#4f5c96">外角下沉后浇带</text></svg></div>
          </div>
        </div>
        <div class="pv-box">
          <svg width="400" height="462" viewBox="965 305 400 462">
            <g stroke="#fff" fill="none">
              <path d="M1108 481.500H1325M1105 485l5-7M1288 485l5-7M1323 485l5-7M1108 477V486M1290 477V486M1325 477V486"/>
              <path d="M984.500 482V521L993 525 976 533 984.500 535V573M985.500 573V611"/>
              <path d="M984 494.500H1338M986 580.500H1107M1291 580.500H1338M1107 581.500H1289"/>
              <path d="M1108 494V582M1290 494V582"/>
              <path d="M1077 527.500H1123.500V504M1265.500 504V527.500H1333"/>
              <path d="M1076 555.500H1122.500V572M1265.500 572V555.500H1333"/>
              <path d="M1262 501l4 4M1262 571l4 4"/>
            </g>
            <path d="M985 499.500H1338M983 576.500H1338" stroke="#e00000" fill="none"/>
            <path d="M1078 504H1324M1077 573H1324" stroke="#f00" stroke-width="2" fill="none"/>
            <g fill="#f00">
              <circle cx="1096" cy="505" r="3"/><circle cx="1122" cy="505" r="3"/><circle cx="1146" cy="506" r="3"/><circle cx="1171" cy="506" r="3"/><circle cx="1197" cy="505" r="3"/><circle cx="1222" cy="505" r="3"/><circle cx="1246" cy="505" r="3"/><circle cx="1272" cy="505" r="3"/><circle cx="1301" cy="505" r="3"/>
              <circle cx="1096" cy="569.500" r="3"/><circle cx="1121" cy="569.500" r="3"/><circle cx="1145" cy="569.500" r="3"/><circle cx="1171" cy="569.500" r="3"/><circle cx="1197" cy="569.500" r="3"/><circle cx="1222" cy="569.500" r="3"/><circle cx="1247" cy="569.500" r="3"/><circle cx="1272" cy="569.500" r="3"/><circle cx="1300" cy="570" r="3"/>
            </g>
            <text x="1201" y="474" fill="#fff" font-size="15" text-anchor="middle" font-family="Liberation Mono">1000</text>
            <text x="1308" y="473" fill="#00c000" font-size="14.500" text-anchor="middle" font-family="Liberation Mono">LaE</text>
            <g fill="#00e000" font-size="13" font-family="Liberation Sans Narrow, Liberation Sans, sans-serif">
              <text x="1056" y="523" textLength="48" lengthAdjust="spacingAndGlyphs">C12@200</text><text x="1291" y="521" textLength="48" lengthAdjust="spacingAndGlyphs">C12@200</text>
              <text x="1057" y="553" textLength="48" lengthAdjust="spacingAndGlyphs">C12@200</text><text x="1292" y="553" textLength="48" lengthAdjust="spacingAndGlyphs">C12@200</text>
            </g>
          </svg>
        </div>
      </div>
      <div class="dlg-foot"><button type="button" class="btn btn-ok">确定</button></div>
    </div>
  </div>
</div>

<!-- status bar -->
<div class="statusbar d-flex">
  <span class="sb-1">38682 Y = 16413</span><span class="sb-2">层高: 0.6</span><span class="sb-3">标高: -6.3~-5.7</span><span class="sb-4">0</span><span class="sb-5">隐藏: 0</span>
  <div class="sb-btn b23"><svg width="21" height="18"><path d="M7 4v11h6v3M7 15h6" fill="none" stroke="#555"/></svg></div>
  <div class="sb-btn b35"><svg width="33" height="18"><rect x="5" y="3" width="12" height="15" fill="#fff" stroke="#3f87d9"/><rect x="1" y="0" width="5" height="5" fill="#f08a24"/><path d="M24 11h7l-3.500 4z" fill="#666"/></svg></div>
  <div class="sb-btn b25"><svg width="23" height="18"><path d="M4 2l15 15M19 2L4 17" stroke="#555"/><circle cx="11.500" cy="10" r="2" fill="#333"/></svg></div>
  <div class="sb-btn b35b"><svg width="33" height="18"><path d="M6 16L17 4" stroke="#555"/><circle cx="10" cy="11" r="2" fill="#333"/><path d="M24 11h7l-3.500 4z" fill="#666"/></svg></div>
  <div class="sb-btn b35b"><svg width="33" height="18"><path d="M3 7h8M7 3v8M10 13h9" stroke="#333"/><path d="M24 11h7l-3.500 4z" fill="#666"/></svg></div>
  <div class="sb-btn b73">跨图层选择</div><div class="sb-btn b61">折线选择</div>
  <span>在此处选择后浇带的类型</span>
</div>

<!-- annotation arrows drawn on top of the screenshot -->
<svg class="arrows" width="1338" height="1028">
  <path d="M255 285L258 285 407 706 411 704 408 722 394 712 400 708Z" fill="#ff2010"/>
  <path d="M430 717L1113 623 1111 619 1128 625 1115 636 1116 631 430 719Z" fill="#ff2010"/>
</svg>
</div>

<script src="https://cdn.jsdelivr.net/npm/bootstrap@5.3.0/dist/js/bootstrap.bundle.min.js"></script>
</body>
</html>
